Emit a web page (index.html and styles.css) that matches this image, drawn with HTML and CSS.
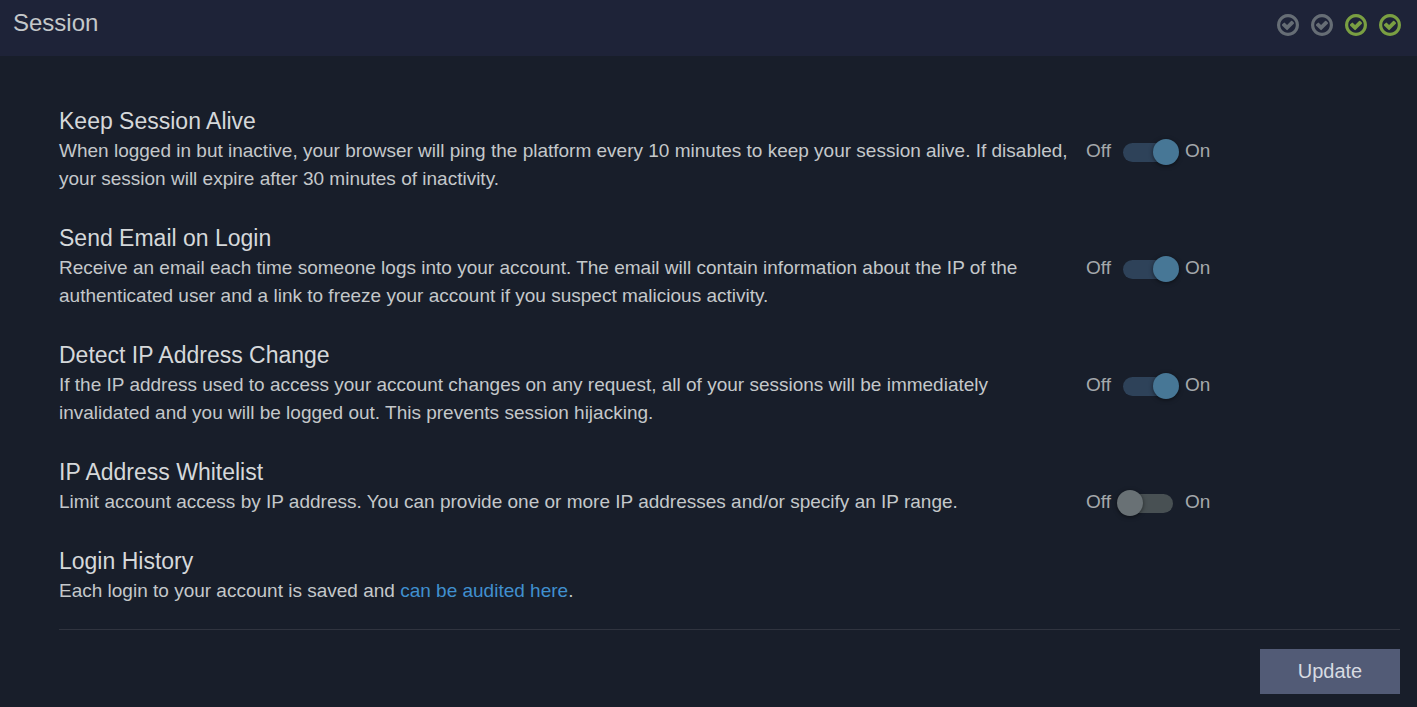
FILE: index.html
```
<!DOCTYPE html>
<html lang="en">
<head>
  <meta charset="UTF-8">
  <meta name="viewport" content="width=device-width, initial-scale=1.0">
  <title>Session</title>
  <link rel="stylesheet" href="styles.css">
</head>
<body>
  <svg width="0" height="0" class="sprite" aria-hidden="true">
    <symbol id="check-circle" viewBox="128 128 1536 1536">
      <path fill="currentColor" d="M1299 813l-422 422q-19 19-45 19t-45-19l-294-294q-19-19-19-45t19-45l102-102q19-19 45-19t45 19l147 147 275-275q19-19 45-19t45 19l102 102q19 19 19 45t-19 45zm141 83q0-148-73-273t-198-198-273-73-273 73-198 198-73 273 73 273 198 198 273 73 273-73 198-198 73-273zm224 0q0 209-103 385.500t-279.500 279.500-385.500 103-385.500-103-279.500-279.500-103-385.500 103-385.500 279.500-279.500 385.500-103 385.500 103 279.500 279.500 103 385.500z"/>
    </symbol>
  </svg>

  <header class="header">
    <h1>Session</h1>
    <div class="status">
      <svg class="status-icon"><use href="#check-circle"/></svg>
      <svg class="status-icon"><use href="#check-circle"/></svg>
      <svg class="status-icon active"><use href="#check-circle"/></svg>
      <svg class="status-icon active"><use href="#check-circle"/></svg>
    </div>
  </header>

  <form class="settings">
    <section class="setting">
      <h2>Keep Session Alive</h2>
      <p>When logged in but inactive, your browser will ping the platform every 10 minutes to keep your session alive. If disabled, your session will expire after 30 minutes of inactivity.</p>
      <label class="toggle">Off <input type="checkbox" name="keep_alive" aria-label="Keep Session Alive" checked> On</label>
    </section>

    <section class="setting">
      <h2>Send Email on Login</h2>
      <p>Receive an email each time someone logs into your account. The email will contain information about the IP of the authenticated user and a link to freeze your account if you suspect malicious activity.</p>
      <label class="toggle">Off <input type="checkbox" name="email_login" aria-label="Send Email on Login" checked> On</label>
    </section>

    <section class="setting">
      <h2>Detect IP Address Change</h2>
      <p>If the IP address used to access your account changes on any request, all of your sessions will be immediately invalidated and you will be logged out. This prevents session hijacking.</p>
      <label class="toggle">Off <input type="checkbox" name="detect_ip" aria-label="Detect IP Address Change" checked> On</label>
    </section>

    <section class="setting">
      <h2>IP Address Whitelist</h2>
      <p>Limit account access by IP address. You can provide one or more IP addresses and/or specify an IP range.</p>
      <label class="toggle">Off <input type="checkbox" name="ip_whitelist" aria-label="IP Address Whitelist"> On</label>
    </section>

    <section class="setting">
      <h2>Login History</h2>
      <p>Each login to your account is saved and <a href="#">can be audited here</a>.</p>
    </section>

    <div class="actions">
      <button type="submit" class="btn">Update</button>
    </div>
  </form>
</body>
</html>
```
FILE: styles.css
```
* {
  box-sizing: border-box;
  margin: 0;
  padding: 0;
}

:root {
  --bg: #181e2a;
  --header-bg: #1e2338;
  --text: #c4c8ca;
  --heading: #d5d8da;
  --muted: #a5a9ac;
  --link: #4090cf;
  --green: #7a9f42;
  --grey: #666d75;
}

body {
  font-family: "Liberation Sans", Arial, sans-serif;
  font-size: 19px;
  line-height: 28px;
  color: var(--text);
  background-color: var(--bg);
}

.sprite {
  display: none;
}

/* Header */
.header {
  display: flex;
  justify-content: space-between;
  height: 56px;
  padding: 9px 16px 0 13px;
  background-color: var(--header-bg);
}

.header h1 {
  font-size: 24px;
  font-weight: 400;
}

.status {
  display: flex;
  gap: 12px;
  padding-top: 5px;
}

.status-icon {
  width: 22px;
  height: 22px;
  color: var(--grey);
}

.status-icon.active {
  color: var(--green);
}

/* Settings */
.settings {
  padding: 50px 17px 13px 59px;
}

.setting {
  display: grid;
  grid-template-columns: 1fr 314px;
  column-gap: 12px;
  margin-bottom: 30px;
}

.setting h2 {
  grid-column: 1 / -1;
  margin-bottom: 1px;
  font-size: 23px;
  font-weight: 400;
  line-height: 30px;
  color: var(--heading);
}

.setting a {
  color: var(--link);
  text-decoration: none;
}

/* Toggle */
.toggle {
  display: flex;
  align-items: flex-start;
  gap: 12px;
  color: var(--muted);
}

.toggle input {
  appearance: none;
  position: relative;
  width: 50px;
  height: 19px;
  margin-top: 6px;
  border-radius: 10px;
  background-color: #485053;
  cursor: pointer;
}

.toggle input::before {
  content: "";
  position: absolute;
  top: -4px;
  left: -6px;
  width: 26px;
  height: 26px;
  border-radius: 50%;
  background-color: #697175;
  box-shadow: 0 1px 4px rgba(0, 0, 0, 0.5);
}

.toggle input:checked {
  background-color: #2e4259;
}

.toggle input:checked::before {
  left: 30px;
  background-color: #477796;
}

/* Actions */
.actions {
  display: flex;
  justify-content: flex-end;
  margin-top: -6px;
  padding-top: 19px;
  border-top: 1px solid #30343f;
}

.btn {
  width: 140px;
  height: 45px;
  border: none;
  font-family: inherit;
  font-size: 20px;
  color: #d8dbe2;
  background-color: #525b76;
  cursor: pointer;
}
```
